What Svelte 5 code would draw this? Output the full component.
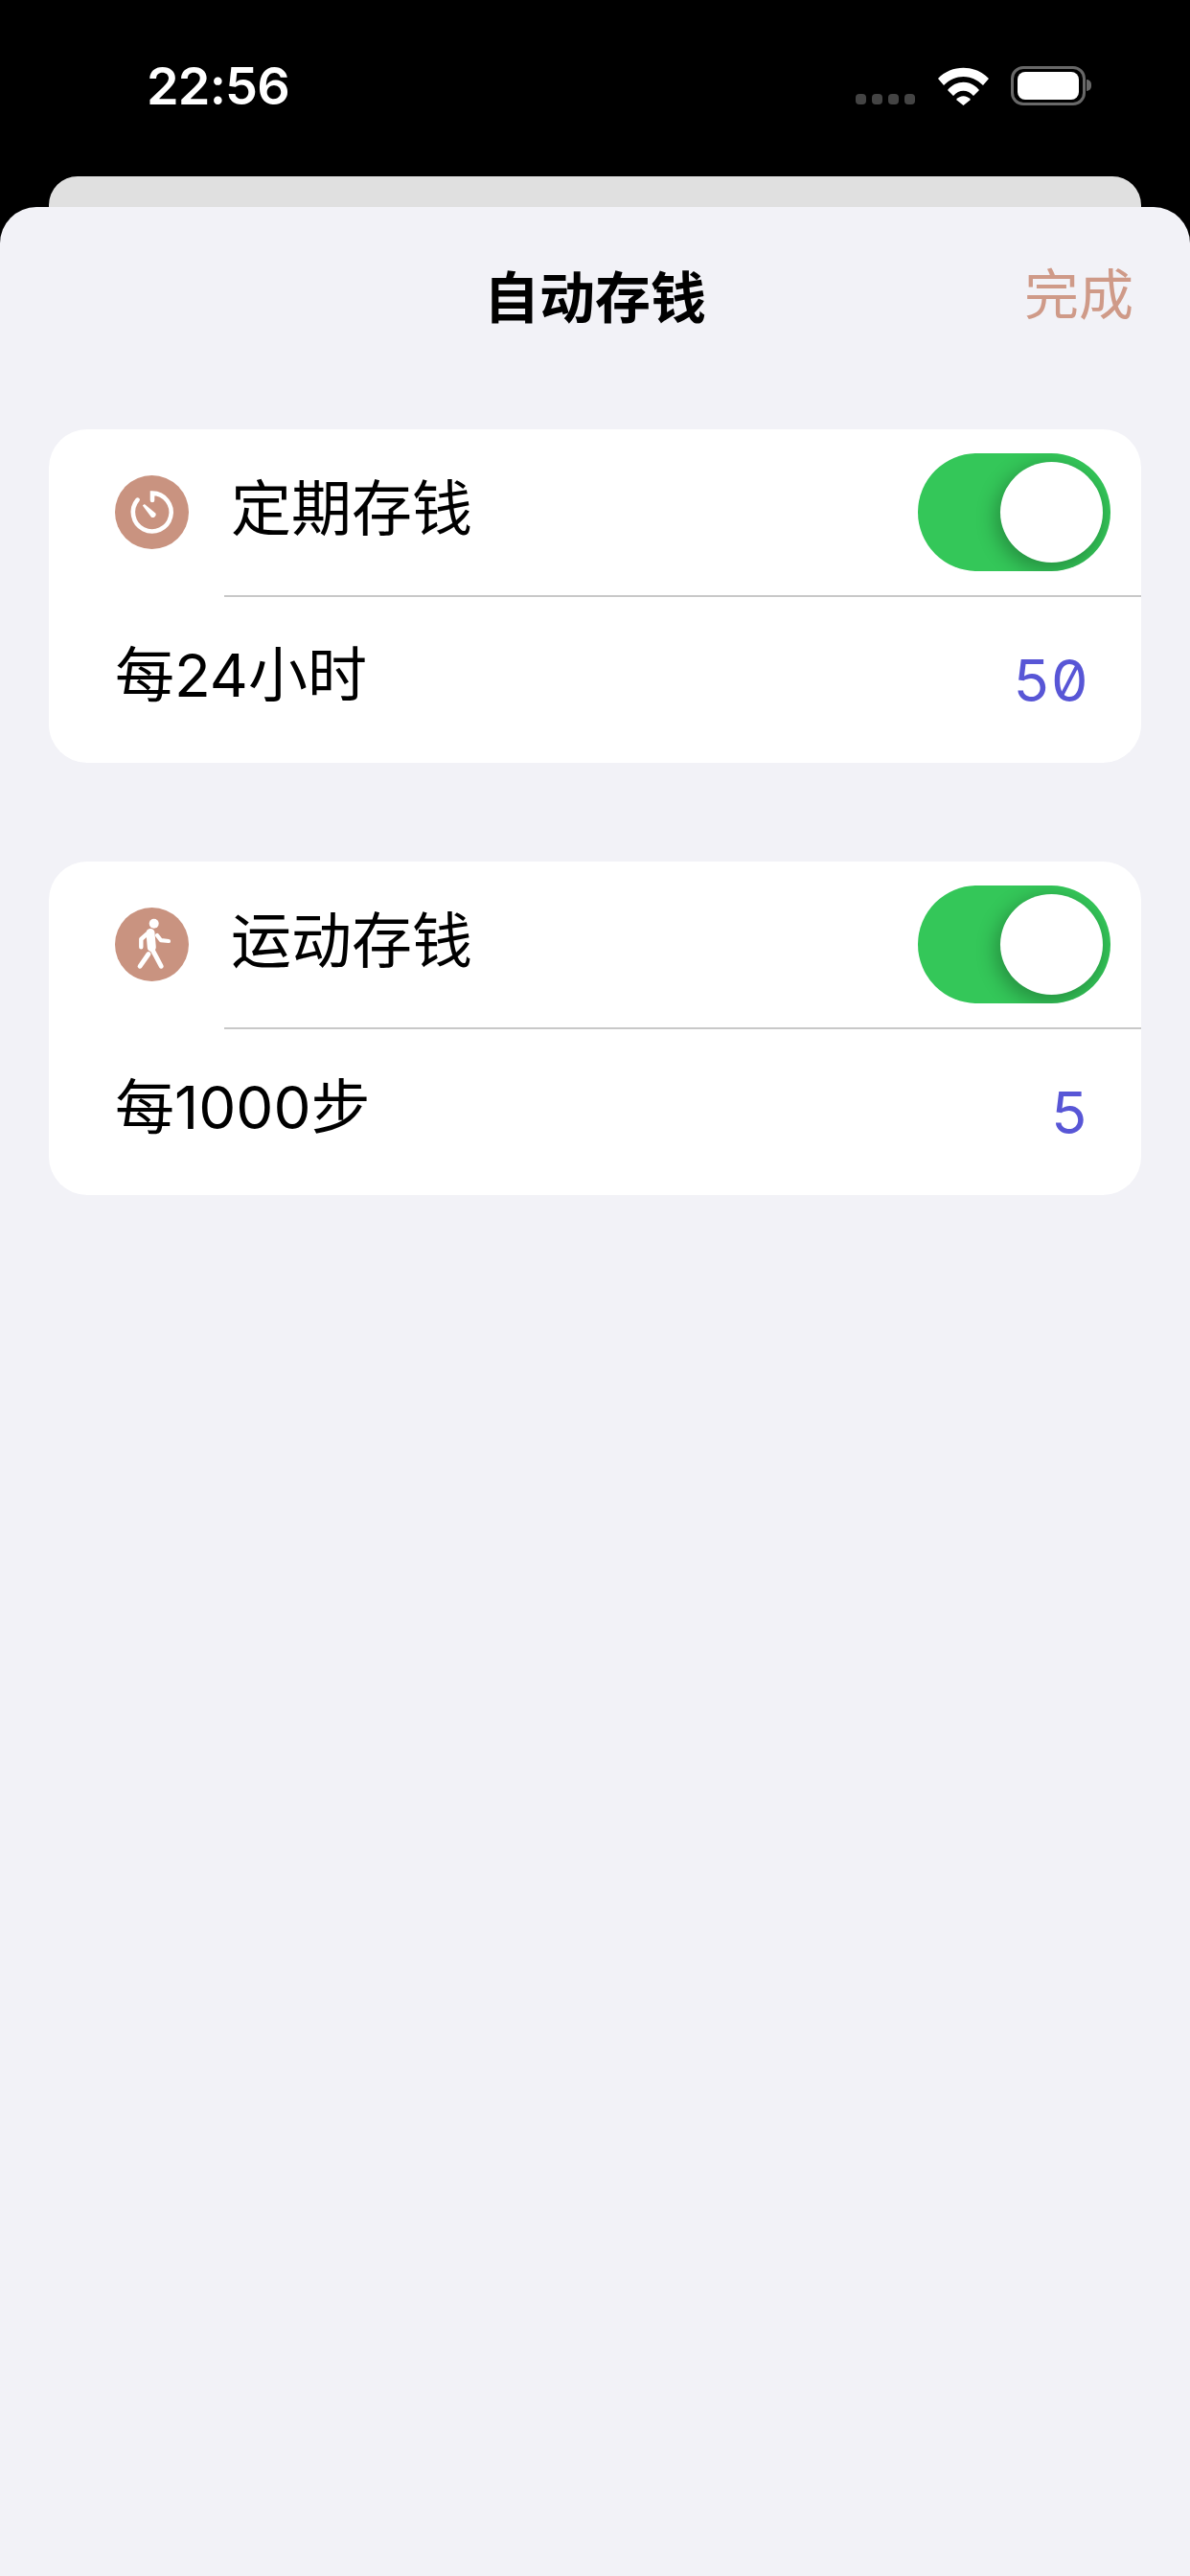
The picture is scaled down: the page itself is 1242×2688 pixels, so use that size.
<script lang="ts">
	const groups = [
		{ title: '定期存钱', icon: 'timer', label: '每24小时', value: '50' },
		{ title: '运动存钱', icon: 'walk', label: '每1000步', value: '5' }
	];
</script>

<div class="screen">
	<header class="status">
		<span class="time">22:56</span>
		<div class="indicators">
			<div class="dots"><i></i><i></i><i></i><i></i></div>
			<svg class="wifi" width="53" height="40" viewBox="0 0 53 40">
				<path d="M0 12C14-3 39-3 53 12L47 19C35 7 18 7 6 19Z" />
				<path d="M10 24C19 13 34 13 43 24L37 30C31 23 22 23 16 30Z" />
				<path d="M19 34C23 29 30 29 34 34L26.5 40Z" />
			</svg>
			<div class="battery"><div class="charge"></div></div>
			<div class="nub"></div>
		</div>
	</header>

	<div class="back-sheet"></div>

	<main class="sheet">
		<div class="nav">
			<span class="nav-title">自动存钱</span>
			<span class="done">完成</span>
		</div>

		{#each groups as g}
			<section class="card">
				<div class="row top">
					<svg class="icon" width="77" height="77" viewBox="0 0 77 77">
						<circle cx="38.5" cy="38.5" r="38.5" fill="#c99380" />
						{#if g.icon === 'timer'}
							<path d="M39 26V18.6A19.9 19.9 0 1 1 23.6 25.6" fill="none" stroke="#fff" stroke-width="4.6" stroke-linecap="round" />
							<path d="M28.8 31.4L30.8 30L42.6 39.8A3.4 3.4 0 0 1 38 43.8Z" fill="#fff" />
						{:else}
							<circle cx="40.7" cy="16.7" r="5" fill="#fff" />
							<path d="M37 26.5L38.3 41.5" stroke="#fff" stroke-width="9" stroke-linecap="round" fill="none" />
							<path d="M33.5 27.5L27.3 33V41.3" stroke="#fff" stroke-width="4.4" stroke-linecap="round" stroke-linejoin="round" fill="none" />
							<path d="M44 29L48 34.2L56 35" stroke="#fff" stroke-width="4.2" stroke-linecap="round" stroke-linejoin="round" fill="none" />
							<path d="M37.5 41L48.3 61.3" stroke="#fff" stroke-width="4.8" stroke-linecap="round" fill="none" />
							<path d="M35 48.5L26 61.3" stroke="#fff" stroke-width="4.8" stroke-linecap="round" fill="none" />
						{/if}
					</svg>
					<span class="row-title">{g.title}</span>
					<div class="toggle"><div class="knob"></div></div>
				</div>
				<div class="separator"></div>
				<div class="row bottom">
					<span class="row-label">{g.label}</span>
					<span class="value">{g.value}</span>
				</div>
			</section>
		{/each}
	</main>
</div>

<style>
	:global(body) {
		background: #000;
	}
	.screen {
		display: flex;
		flex-direction: column;
		height: 2688px;
		overflow: hidden;
		font-family: Inter, "Noto Sans CJK SC", sans-serif;
		background: #000;
	}
	.status {
		height: 184px;
		box-sizing: border-box;
		padding: 62px 103px 0 153px;
		display: flex;
		justify-content: space-between;
		align-items: flex-start;
	}
	.time {
		font-size: 54px;
		line-height: 56px;
		font-weight: 600;
		color: #fff;
		letter-spacing: -0.8px;
	}
	.indicators {
		display: flex;
		align-items: flex-start;
		padding-top: 7px;
	}
	.dots {
		display: flex;
		gap: 6px;
		margin: 29px 24px 0 0;
	}
	.dots i {
		width: 11px;
		height: 11px;
		border-radius: 4px;
		background: #444;
	}
	.wifi {
		fill: #fff;
		margin: 1px 23px 0 0;
	}
	.battery {
		width: 78px;
		height: 41px;
		box-sizing: border-box;
		border: 3px solid #686868;
		border-radius: 13px;
		padding: 3px 4px;
	}
	.charge {
		height: 100%;
		background: #fff;
		border-radius: 8px;
	}
	.nub {
		width: 5px;
		height: 12px;
		margin: 14px 0 0 1px;
		background: #686868;
		border-radius: 0 6px 6px 0;
	}
	.back-sheet {
		height: 32px;
		margin: 0 51px;
		background: #e0e0e0;
		border-radius: 30px 30px 0 0;
	}
	.sheet {
		flex: 1;
		background: #f2f2f7;
		border-radius: 38px 38px 0 0;
		padding: 0 51px;
	}
	.nav {
		height: 232px;
		box-sizing: border-box;
		padding-top: 60px;
		position: relative;
		display: flex;
		justify-content: center;
	}
	.nav-title {
		font-size: 58px;
		line-height: 70px;
		font-weight: 700;
		color: #000;
	}
	.done {
		position: absolute;
		right: 8px;
		top: 57px;
		font-size: 57px;
		line-height: 70px;
		color: #cf9a88;
	}
	.card {
		background: #fff;
		border-radius: 40px;
		margin-bottom: 103px;
	}
	.row {
		display: flex;
		align-items: center;
	}
	.top {
		height: 173px;
		padding: 0 32px 0 69px;
	}
	.icon {
		flex: none;
	}
	.row-title {
		margin: 0 0 10px 44px;
		font-size: 63px;
		line-height: 80px;
		color: #000;
		flex: 1;
	}
	.toggle {
		width: 201px;
		height: 123px;
		box-sizing: border-box;
		padding: 9px 8px;
		border-radius: 62px;
		background: #34c759;
		display: flex;
		justify-content: flex-end;
		overflow: hidden;
	}
	.knob {
		width: 107px;
		height: 105px;
		border-radius: 50%;
		background: #fff;
		box-shadow: -3px 6px 20px 2px rgba(0, 0, 0, 0.28);
	}
	.separator {
		height: 2px;
		margin-left: 183px;
		background: #c8c8c8;
	}
	.bottom {
		height: 173px;
		padding: 0 55px 0 69px;
		justify-content: space-between;
	}
	.row-label {
		margin: 0 0 10px 0;
		font-size: 62px;
		line-height: 80px;
		color: #000;
	}
	.value {
		font-family: Inter, monospace;
		font-feature-settings: "zero", "tnum";
		font-size: 61px;
		line-height: 80px;
		color: #5856d6;
	}
</style>
